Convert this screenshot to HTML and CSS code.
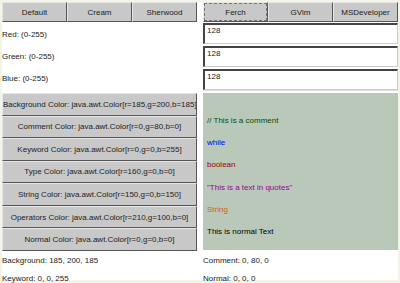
FILE: index.html
```html
<!DOCTYPE html>
<html lang="en">
<head>
    <meta charset="UTF-8">
    <title>Color Settings</title>
    <link rel="stylesheet" href="styles.css">
</head>
<body>

<div class="frame">
    <!-- presets -->
    <div class="presets">
        <button class="btn">Default</button>
        <button class="btn">Cream</button>
        <button class="btn">Sherwood</button>
    </div>
    <div class="presets">
        <button class="btn focused">Ferch</button>
        <button class="btn">GVim</button>
        <button class="btn">MSDeveloper</button>
    </div>

    <!-- rgb inputs -->
    <div class="labels">
        <div class="row">Red: (0-255)</div>
        <div class="row">Green: (0-255)</div>
        <div class="row">Blue: (0-255)</div>
    </div>
    <div class="fields">
        <input class="field" type="text" value="128">
        <input class="field" type="text" value="128">
        <input class="field" type="text" value="128">
    </div>

    <!-- color buttons -->
    <div class="colors">
        <button class="btn">Background Color: java.awt.Color[r=185,g=200,b=185]</button>
        <button class="btn">Comment Color: java.awt.Color[r=0,g=80,b=0]</button>
        <button class="btn">Keyword Color: java.awt.Color[r=0,g=0,b=255]</button>
        <button class="btn">Type Color: java.awt.Color[r=160,g=0,b=0]</button>
        <button class="btn">String Color: java.awt.Color[r=150,g=0,b=150]</button>
        <button class="btn">Operators Color: java.awt.Color[r=210,g=100,b=0]</button>
        <button class="btn">Normal Color: java.awt.Color[r=0,g=0,b=0]</button>
    </div>
    <div class="preview">
        <div class="comment">// This is a comment</div>
        <div class="keyword">while</div>
        <div class="type">boolean</div>
        <div class="string">"This is a text in quotes"</div>
        <div class="operator">String</div>
        <div class="normal">This is normal Text</div>
    </div>

    <!-- values -->
    <div class="values">
        <div>Background: 185, 200, 185</div>
        <div>Keyword: 0, 0, 255</div>
    </div>
    <div class="values">
        <div>Comment: 0, 80, 0</div>
        <div>Normal: 0, 0, 0</div>
    </div>
</div>

</body>
</html>
```

FILE: styles.css
```css
body {
    margin: 0;
    padding: 2px 2px 3px 2px;
    background-color: #f3f3e6;
    font-family: "Liberation Sans", Arial, sans-serif;
    font-size: 8px;
    color: #222;
}
.frame {
    display: grid;
    grid-template-columns: 195px 195px;
    column-gap: 6px;
    background: white;
    height: 278px;
}
.btn {
    font-family: "Liberation Sans", Arial, sans-serif;
    font-size: 8px;
    color: #222;
    background-color: #c8c8c8;
    border: 1px solid #555;
    border-top-color: #e6e6e6;
    border-left-color: #e6e6e6;
    margin: 0;
    padding: 0;
    white-space: nowrap;
    overflow: hidden;
}
.focused {
    outline: 1px dashed #777;
    outline-offset: -2px;
}
.presets {
    display: grid;
    grid-template-columns: 1fr 1fr 1fr;
    height: 20px;
}
.labels {
    display: grid;
    grid-template-rows: repeat(3, 1fr);
    height: 67px;
    padding-top: 1px;
}
.labels .row {
    display: flex;
    align-items: center;
}
.fields {
    display: flex;
    flex-direction: column;
    gap: 2px;
    padding-top: 1px;
    height: 67px;
    border-bottom: 1px solid #ddd;
}
.field {
    height: 21px;
    box-sizing: border-box;
    margin: 0;
    padding: 0 0 8px 2px;
    font-family: "Liberation Sans", Arial, sans-serif;
    font-size: 8px;
    color: #222;
    border: 1px solid #ccc;
    border-top: 2px solid #444;
    border-left: 2px solid #444;
    background: white;
}
.colors {
    display: grid;
    grid-template-rows: repeat(7, 1fr);
    height: 158px;
    margin-top: 2px;
}
.preview {
    background-color: #b9c8b9;
    height: 157px;
    margin-top: 2px;
    padding: 23px 0 0 4px;
    box-sizing: border-box;
    display: flex;
    flex-direction: column;
    gap: 12.2px;
}
.preview div {
    line-height: 10px;
}
.comment { color: #005000; }
.keyword { color: #0000ff; }
.type { color: #a00000; }
.string { color: #960096; }
.operator { color: #d26400; }
.normal { color: #000; }
.values {
    display: grid;
    grid-template-rows: 1fr 1fr;
    height: 35px;
    padding-top: 1px;
}
.values div {
    display: flex;
    align-items: center;
}
```
